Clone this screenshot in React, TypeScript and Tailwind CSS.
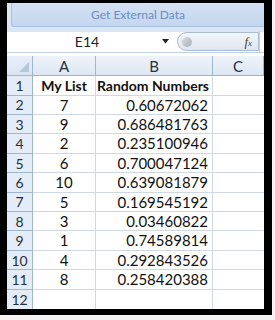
const rows: [string, string][] = [
  ["7", "0.60672062"],
  ["9", "0.686481763"],
  ["2", "0.235100946"],
  ["6", "0.700047124"],
  ["10", "0.639081879"],
  ["5", "0.169545192"],
  ["3", "0.03460822"],
  ["1", "0.74589814"],
  ["4", "0.292843526"],
  ["8", "0.258420388"],
];

const font = { fontFamily: "Lato, 'Open Sans', sans-serif" };

export default function App() {
  return (
    <div className="w-[275px] h-[320px] bg-[#f4f4f4] overflow-hidden" style={font}>
      <div className="w-[272px] h-[315px] border-black border-l-[7px] border-t-[3px] border-r-[8px] border-b-[6px] bg-white flex flex-col overflow-hidden">
        {/* ribbon group */}
        <div className="h-[30px] bg-[#dbe6f4] pl-[4px] flex flex-col">
          <div className="h-[24px] bg-gradient-to-b from-[#d3e1f3] to-[#c4d7ef] border-l border-b border-[#a9c1e0] rounded-bl-[3px] flex items-center justify-center text-[12px] text-[#6a8dbd]">
            Get External Data
          </div>
        </div>

        {/* formula bar */}
        <div className="h-[21px] bg-white flex items-center border-b border-[#c0d0e4]">
          <div className="w-[158px] text-center text-[14px] text-[#222] leading-none pl-[2px]">E14</div>
          <svg width="8" height="5" viewBox="0 0 8 5" className="ml-[-3px]">
            <path d="M0 0 H7 L3.5 4.5 Z" fill="#222" />
          </svg>
          <div className="ml-[7px] w-[82px] h-[19px] rounded-l-full border border-[#a9bcd6] bg-gradient-to-b from-[#f3f6fa] to-[#dfe6ef] flex items-center pl-[4px] pr-[6px]">
            <div className="w-[10px] h-[10px] rounded-full bg-gradient-to-br from-[#d8dde4] to-[#a8b0bb]" />
            <span className="ml-auto text-[13px] italic text-[#444]" style={{ fontFamily: "'Liberation Serif', serif" }}>
              f<span className="text-[9px]">x</span>
            </span>
          </div>
          <div className="w-px h-[21px] bg-[#c6d1de]" />
        </div>

        <div className="h-[4px] bg-white" />

        {/* sheet grid */}
        <div className="grid grid-cols-[26px_63px_117px_1fr] text-[14px] text-[#111]">
          {/* header row */}
          <div className="h-[20px] bg-gradient-to-b from-[#e9eff8] to-[#dbe5f2] border-r border-b border-[#9eb6ce] relative">
            <svg width="10" height="10" viewBox="0 0 10 10" className="absolute right-[3px] bottom-[3px]">
              <path d="M10 0 V10 H0 Z" fill="#b4c6de" />
            </svg>
          </div>
          {["A", "B", "C"].map((c) => (
            <div
              key={c}
              className="h-[20px] bg-gradient-to-b from-[#eef3fa] to-[#dde7f4] border-r border-b border-[#9eb6ce] flex items-center justify-center text-[15px] text-[#27313d]"
            >
              {c}
            </div>
          ))}

          {/* row 1 */}
          <div className="h-[19.4px] bg-[#e4ecf7] border-r border-b border-[#9eb6ce] flex items-center justify-center text-[#27313d]">1</div>
          <div className="h-[19.4px] border-r border-b border-[#d0d7e5] flex items-center justify-center font-bold">My List</div>
          <div className="h-[19.4px] border-r border-b border-[#d0d7e5] flex items-center justify-end pr-[3px] font-bold">Random Numbers</div>
          <div className="h-[19.4px] border-b border-[#d0d7e5]" />

          {rows.map(([a, b], i) => (
            <div key={i} className="contents">
              <div className="h-[19.4px] bg-[#e4ecf7] border-r border-b border-[#9eb6ce] flex items-center justify-center text-[#27313d]">
                {i + 2}
              </div>
              <div className="h-[19.4px] border-r border-b border-[#d0d7e5] flex items-center justify-center text-[15px]">{a}</div>
              <div className="h-[19.4px] border-r border-b border-[#d0d7e5] flex items-center justify-end pr-[4px] text-[15px]">{b}</div>
              <div className="h-[19.4px] border-b border-[#d0d7e5]" />
            </div>
          ))}

          {/* row 12 */}
          <div className="h-[19.4px] bg-[#e4ecf7] border-r border-[#9eb6ce] flex items-center justify-center text-[#27313d]">12</div>
          <div className="h-[19.4px] border-r border-[#d0d7e5]" />
          <div className="h-[19.4px] border-r border-[#d0d7e5]" />
          <div className="h-[19.4px]" />
        </div>
      </div>
    </div>
  );
}
